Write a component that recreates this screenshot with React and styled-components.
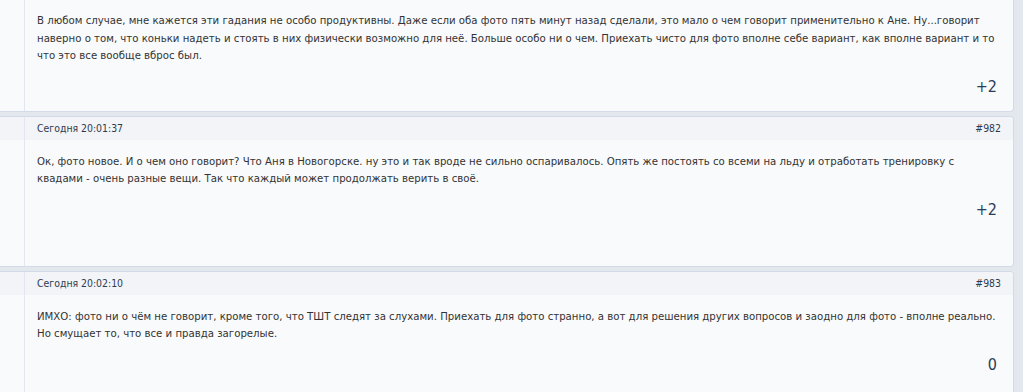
import React from "react";
import styled, { createGlobalStyle } from "styled-components";

const GlobalStyle = createGlobalStyle`
  html, body {
    margin: 0;
    padding: 0;
    background: #e3e7ee;
    overflow: hidden;
  }
  body {
    font-family: "DejaVu Sans Condensed", "DejaVu Sans", sans-serif;
    color: #333;
  }
`;

// first post is scrolled past the top edge, so its header is not shown
const posts = [
  {
    id: 981,
    date: "",
    likes: "+2",
    sideHeight: 0,
    text: "В любом случае, мне кажется эти гадания не особо продуктивны. Даже если оба фото пять минут назад сделали, это мало о чем говорит применительно к Ане. Ну...говорит наверно о том, что коньки надеть и стоять в них физически возможно для неё. Больше особо ни о чем. Приехать чисто для фото вполне себе вариант, как вполне вариант и то что это все вообще вброс был.",
  },
  {
    id: 982,
    date: "Сегодня 20:01:37",
    likes: "+2",
    sideHeight: 149,
    text: "Ок, фото новое. И о чем оно говорит? Что Аня в Новогорске. ну это и так вроде не сильно оспаривалось. Опять же постоять со всеми на льду и отработать тренировку с квадами - очень разные вещи. Так что каждый может продолжать верить в своё.",
  },
  {
    id: 983,
    date: "Сегодня 20:02:10",
    likes: "0",
    sideHeight: 149,
    text: "ИМХО: фото ни о чём не говорит, кроме того, что ТШТ следят за слухами. Приехать для фото странно, а вот для решения других вопросов и заодно для фото - вполне реально. Но смущает то, что все и правда загорелые.",
  },
];

const Thread = () => (
  <>
    <GlobalStyle />
    <List>
      {posts.map((p) => (
        <Card key={p.id}>
          <Side $minHeight={p.sideHeight}>
            <SideHead />
          </Side>
          <Main>
            <Head>
              <span>{p.date}</span>
              <span>{p.date ? `#${p.id}` : ""}</span>
            </Head>
            <Body>{p.text}</Body>
            <Footer>
              <Rating>{p.likes}</Rating>
            </Footer>
          </Main>
        </Card>
      ))}
    </List>
  </>
);

export default Thread;

const List = styled.div`
  display: flex;
  flex-direction: column;
  gap: 4px;
  margin-top: -25px;
  padding-right: 9px;
`;

const Card = styled.div`
  display: flex;
  background: #f9fafc;
  border: 1px solid #d3dbe7;
  border-left: none;
  border-radius: 0 4px 4px 0;
  overflow: hidden;
`;

const Side = styled.div`
  width: 25px;
  flex: none;
  box-sizing: border-box;
  min-height: ${(p) => p.$minHeight}px;
  border-right: 1px solid #e1e6ef;
`;

const SideHead = styled.div`
  height: 23px;
  background: #f3f4f7;
`;

const Main = styled.div`
  flex: 1;
  display: flex;
  flex-direction: column;
`;

const Head = styled.div`
  height: 23px;
  display: flex;
  align-items: center;
  justify-content: space-between;
  padding: 0 12px;
  background: #f3f4f7;
  font-size: 10.4px;
  color: #2d3b4f;
`;

const Body = styled.div`
  padding: 13px 12px 0;
  font-size: 11.3px;
  line-height: 17.5px;
  color: #333;
`;

const Footer = styled.div`
  display: flex;
  justify-content: flex-end;
  padding: 12px 16px 14px;
`;

const Rating = styled.span`
  font-size: 16px;
  line-height: 20px;
  color: #2b3d55;
`;
